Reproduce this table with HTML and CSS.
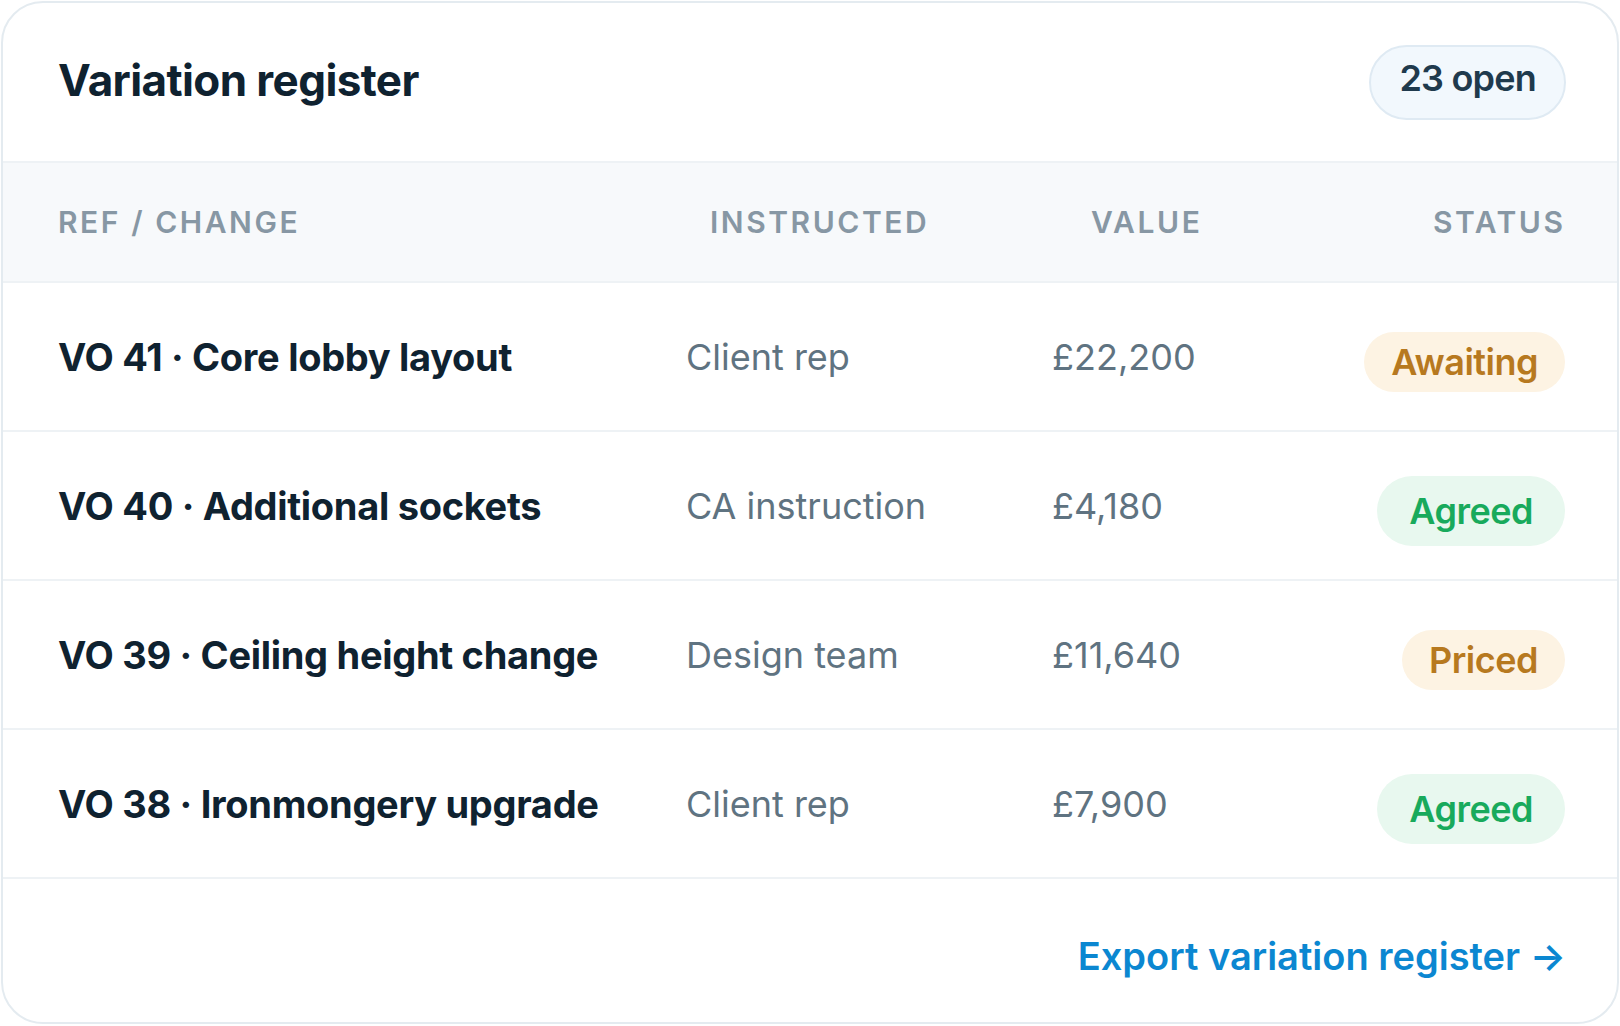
FILE: index.html
```html
<!DOCTYPE html>
<html lang="en">
<head>
    <meta charset="UTF-8">
    <meta name="viewport" content="width=device-width, initial-scale=1.0">
    <title>Variation register</title>
    <link rel="stylesheet" href="styles.css">
</head>
<body>

    <section class="card">
        <header class="card-head">
            <h1>Variation register</h1>
            <span class="count-badge">23 open</span>
        </header>

        <div class="table-head">
            <span>Ref / change</span>
            <span>Instructed</span>
            <span>Value</span>
            <span class="col-status">Status</span>
        </div>

        <div class="row">
            <span class="row-name">VO 41 · Core lobby layout</span>
            <span class="row-muted">Client rep</span>
            <span class="row-muted">£22,200</span>
            <span class="pill pill-amber">Awaiting</span>
        </div>

        <div class="row">
            <span class="row-name">VO 40 · Additional sockets</span>
            <span class="row-muted">CA instruction</span>
            <span class="row-muted">£4,180</span>
            <span class="pill pill-green">Agreed</span>
        </div>

        <div class="row">
            <span class="row-name">VO 39 · Ceiling height change</span>
            <span class="row-muted">Design team</span>
            <span class="row-muted">£11,640</span>
            <span class="pill pill-amber">Priced</span>
        </div>

        <div class="row">
            <span class="row-name">VO 38 · Ironmongery upgrade</span>
            <span class="row-muted">Client rep</span>
            <span class="row-muted">£7,900</span>
            <span class="pill pill-green">Agreed</span>
        </div>

        <footer class="card-foot">
            <a href="#" class="export-link">Export variation register →</a>
        </footer>
    </section>

</body>
</html>
```

FILE: styles.css
```css
body {
    margin: 0;
    font-family: Inter, "Noto Sans", sans-serif;
    background-color: #ffffff;
    color: #0f2230;
}

.card {
    box-sizing: border-box;
    width: 1618px;
    height: 1023px;
    margin: 1px;
    border: 2px solid #e4ebf0;
    border-radius: 42px;
    background-color: #fff;
    display: flex;
    flex-direction: column;
    overflow: hidden;
}

.card-head {
    height: 158px;
    padding: 0 51px 0 55px;
    border-bottom: 2px solid #eef2f5;
    display: flex;
    align-items: center;
    justify-content: space-between;
}

h1 {
    margin: 0 0 4px;
    font-size: 44px;
    font-weight: 700;
    letter-spacing: -0.6px;
    color: #0f2230;
}

.count-badge {
    font-size: 36px;
    font-weight: 600;
    letter-spacing: -0.8px;
    color: #1f3a4d;
    background-color: #f2f8fd;
    border: 2px solid #dfeaf3;
    border-radius: 999px;
    padding: 9px 28px 18px;
}

.table-head {
    height: 118px;
    padding: 0 54px 0 55px;
    background-color: #f7f9fb;
    border-bottom: 2px solid #eef2f5;
    display: grid;
    grid-template-columns: 652px 381px 1fr auto;
    align-items: center;
    font-size: 30px;
    font-weight: 600;
    letter-spacing: 0.085em;
    text-transform: uppercase;
    color: #8797a4;
}

.table-head .col-status {
    justify-self: end;
    margin-right: -0.085em;
}

.row {
    height: 147px;
    padding: 0 52px 0 55px;
    border-bottom: 2px solid #eef2f5;
    display: grid;
    grid-template-columns: 628px 366px 1fr auto;
    align-items: center;
}

.row-name {
    font-size: 38px;
    font-weight: 700;
    letter-spacing: -0.3px;
    color: #0f2230;
}

.row-muted {
    font-size: 36px;
    font-weight: 400;
    color: #5f7381;
}

.pill {
    justify-self: end;
    margin-top: 10px;
    font-size: 36px;
    font-weight: 600;
    letter-spacing: -0.5px;
    border-radius: 999px;
    padding: 8px 27px;
}

.pill-amber {
    background-color: #fdf3e3;
    color: #b7791f;
}

.pill-green {
    background-color: #e8f8ef;
    color: #18aa5c;
    padding: 13px 32px;
}

.card-foot {
    flex-grow: 1;
    padding: 10px 51px 0;
    display: flex;
    align-items: center;
    justify-content: flex-end;
}

.export-link {
    font-size: 38px;
    font-weight: 600;
    color: #0b87d1;
    text-decoration: none;
}
```
